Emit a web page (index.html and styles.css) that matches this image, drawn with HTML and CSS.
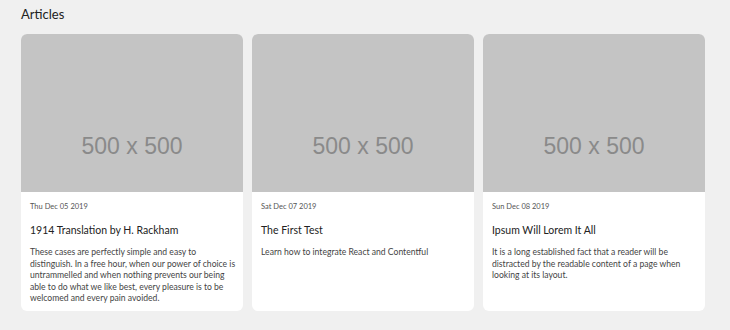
FILE: index.html
```html
<!DOCTYPE html>
<html lang="en">
<head>
    <meta charset="UTF-8">
    <title>Articles</title>
    <link rel="stylesheet" href="styles.css">
</head>
<body>
    <main class="page">
        <h2 class="page-title">Articles</h2>
        <div class="cards">
            <article class="card">
                <div class="card-image"><span>500 x 500</span></div>
                <div class="card-body">
                    <p class="card-date">Thu Dec 05 2019</p>
                    <h3 class="card-title">1914 Translation by H. Rackham</h3>
                    <p class="card-text">These cases are perfectly simple and easy to distinguish. In a free hour, when our power of choice is untrammelled and when nothing prevents our being able to do what we like best, every pleasure is to be welcomed and every pain avoided.</p>
                </div>
            </article>
            <article class="card">
                <div class="card-image"><span>500 x 500</span></div>
                <div class="card-body">
                    <p class="card-date">Sat Dec 07 2019</p>
                    <h3 class="card-title">The First Test</h3>
                    <p class="card-text">Learn how to integrate React and Contentful</p>
                </div>
            </article>
            <article class="card">
                <div class="card-image"><span>500 x 500</span></div>
                <div class="card-body">
                    <p class="card-date">Sun Dec 08 2019</p>
                    <h3 class="card-title">Ipsum Will Lorem It All</h3>
                    <p class="card-text">It is a long established fact that a reader will be distracted by the readable content of a page when looking at its layout.</p>
                </div>
            </article>
        </div>
    </main>
</body>
</html>
```

FILE: styles.css
```css
body {
    margin: 0;
    background: #f0f0f0;
    font-family: 'Lato', 'Noto Sans', sans-serif;
    color: #222;
}

.page {
    padding: 5px 25px 18px 21px;
}

.page-title {
    font-size: 13px;
    font-weight: 400;
    margin: 0 0 11px;
    line-height: 18px;
}

.cards {
    display: grid;
    grid-template-columns: repeat(3, 1fr);
    gap: 9px;
}

.card {
    background: #fff;
    border-radius: 6px;
    overflow: hidden;
    height: 277px;
}

/* square placeholder, only the top part shows */
.card-image {
    height: 158px;
    background: #c4c4c4;
    color: #8a8a8a;
    font-family: 'Liberation Sans', Arial, sans-serif;
    font-size: 23px;
    text-align: center;
    overflow: hidden;
}

.card-image span {
    display: block;
    line-height: 26px;
    padding-top: 99px;
}

.card-body {
    padding: 10px 5px 8px 9px;
}

.card-date {
    font-size: 7.5px;
    color: #555;
    margin: 0 0 11px;
    line-height: 10px;
}

.card-title {
    font-size: 10.5px;
    font-weight: 400;
    color: #222;
    margin: 0 0 10px;
    line-height: 14px;
}

.card-text {
    font-size: 8.6px;
    line-height: 11.5px;
    color: #444;
    margin: 0;
}
```
